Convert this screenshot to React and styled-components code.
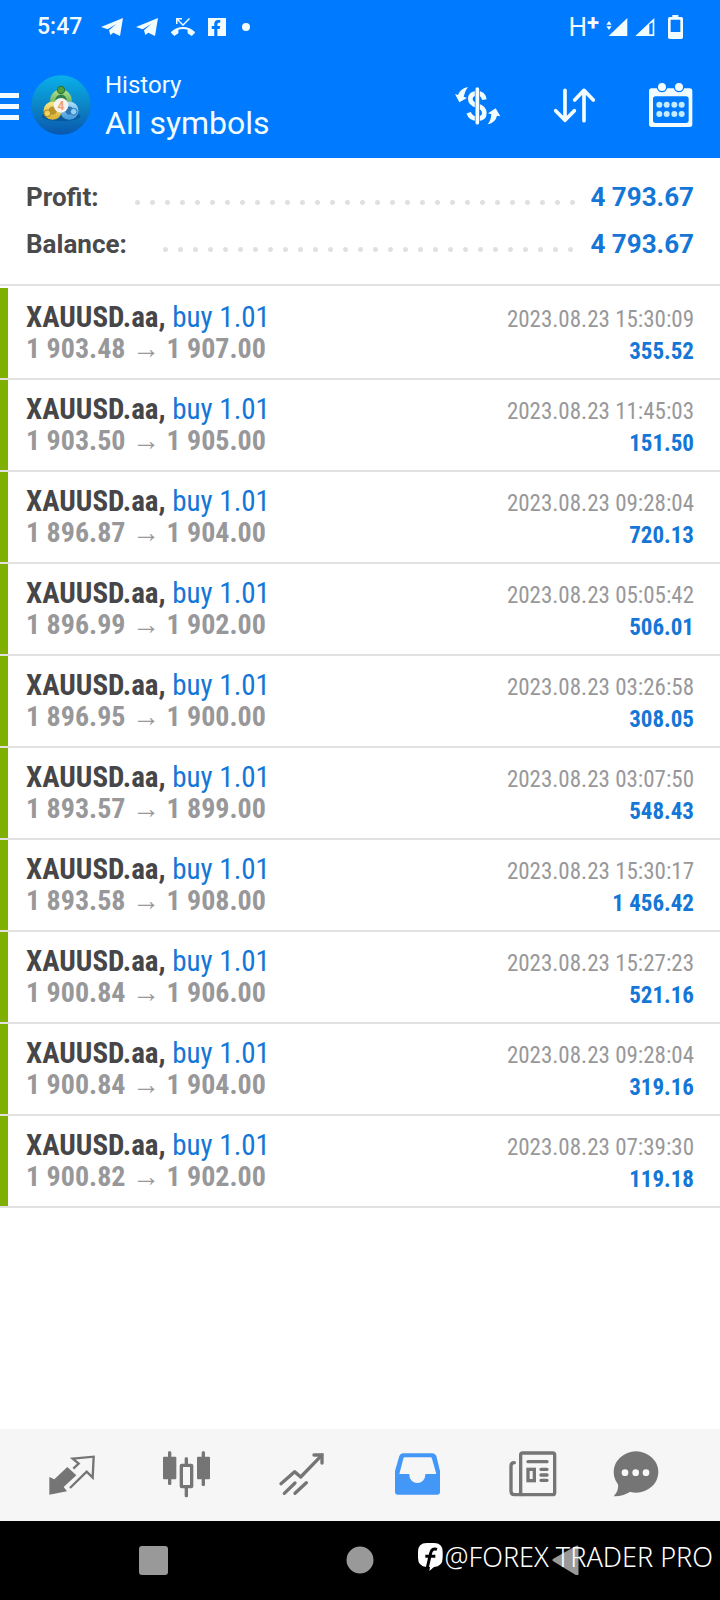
import React from 'react'
import styled, { createGlobalStyle } from 'styled-components'
import { FaFacebookF } from 'react-icons/fa'
import { MdPhoneMissed } from 'react-icons/md'

const deals = [
  { open: '1 903.48', close: '1 907.00', time: '2023.08.23 15:30:09', profit: '355.52' },
  { open: '1 903.50', close: '1 905.00', time: '2023.08.23 11:45:03', profit: '151.50' },
  { open: '1 896.87', close: '1 904.00', time: '2023.08.23 09:28:04', profit: '720.13' },
  { open: '1 896.99', close: '1 902.00', time: '2023.08.23 05:05:42', profit: '506.01' },
  { open: '1 896.95', close: '1 900.00', time: '2023.08.23 03:26:58', profit: '308.05' },
  { open: '1 893.57', close: '1 899.00', time: '2023.08.23 03:07:50', profit: '548.43' },
  { open: '1 893.58', close: '1 908.00', time: '2023.08.23 15:30:17', profit: '1 456.42' },
  { open: '1 900.84', close: '1 906.00', time: '2023.08.23 15:27:23', profit: '521.16' },
  { open: '1 900.84', close: '1 904.00', time: '2023.08.23 09:28:04', profit: '319.16' },
  { open: '1 900.82', close: '1 902.00', time: '2023.08.23 07:39:30', profit: '119.18' },
]

const TelegramIcon = () => (
  <svg width="22" height="18" viewBox="0 0 66 54" fill="currentColor">
    <path d="M0 27 L66 0 L57 54 L37 44 L28 51 L24 37 L46 18 L20 34 Z" />
  </svg>
)

const MobileSignalIcon = () => (
  <svg width="22" height="20" viewBox="0 0 66 60" fill="currentColor">
    <path d="M64 3 V57 H8 Z" />
    <path d="M1 23 L9 12 L17 23 Z M1 28 L9 39 L17 28 Z" />
  </svg>
)

const WeakSignalIcon = () => (
  <svg width="20" height="20" viewBox="0 0 60 60" fill="currentColor">
    <path fillRule="evenodd" d="M58 3 V57 H1 Z M43 22 V52 H53 V16 Z" />
  </svg>
)

const BatteryIcon = () => (
  <svg width="15" height="24" viewBox="0 0 45 72" fill="currentColor">
    <path
      fillRule="evenodd"
      d="M13 0 H31 V6 H40 Q45 6 45 11 V67 Q45 72 40 72 H5 Q0 72 0 67 V11 Q0 6 5 6 H13 Z M8 14 V51 H37 V14 Z"
    />
  </svg>
)

const AppLogo = () => (
  <svg width="60" height="60" viewBox="0 0 180 180">
    <defs>
      <linearGradient id="sky" x1="0" y1="0" x2="0" y2="1">
        <stop offset="0" stopColor="#08b0ea" />
        <stop offset="0.5" stopColor="#0c86c6" />
        <stop offset="1" stopColor="#0a58ae" />
      </linearGradient>
      <linearGradient id="leaf" x1="0" y1="0" x2="0" y2="1">
        <stop offset="0" stopColor="#a3da86" />
        <stop offset="1" stopColor="#4f9f45" />
      </linearGradient>
      <linearGradient id="gold" x1="0" y1="0" x2="0" y2="1">
        <stop offset="0" stopColor="#f3e27e" />
        <stop offset="1" stopColor="#dcb43a" />
      </linearGradient>
      <linearGradient id="water" x1="0" y1="0" x2="0" y2="1">
        <stop offset="0" stopColor="#a4d8f6" />
        <stop offset="1" stopColor="#4b9fe0" />
      </linearGradient>
    </defs>
    <circle cx="90" cy="90" r="89" fill="url(#sky)" />
    <ellipse cx="90" cy="124" rx="58" ry="14" fill="#07427c" opacity="0.5" />
    <circle cx="90" cy="76" r="25" fill="#2f8050" stroke="url(#leaf)" strokeWidth="15" />
    <circle cx="65" cy="107" r="20" fill="#b8922c" stroke="url(#gold)" strokeWidth="15" />
    <circle cx="115" cy="107" r="20" fill="#2c74b4" stroke="url(#water)" strokeWidth="15" />
    <circle cx="90" cy="45" r="11" fill="#4f9f3c" stroke="#2b7030" strokeWidth="3" />
    <circle cx="49" cy="115" r="10" fill="#f0d35a" stroke="#a88424" strokeWidth="3" />
    <circle cx="128" cy="110" r="10" fill="#8fd0f5" stroke="#2d74b4" strokeWidth="3" />
    <circle cx="90" cy="91" r="22" fill="#f6f3ee" />
    <text x="90" y="104" textAnchor="middle" fontFamily="Roboto, sans-serif" fontSize="36" fontWeight="700" fill="#f0a070">
      4
    </text>
  </svg>
)

const CurrencyIcon = () => (
  <svg width="48" height="48" viewBox="0 0 144 144" fill="none" stroke="currentColor">
    <path d="M88 56 Q85 37 67 37 Q46 37 46 54 Q46 68 67 74 Q88 80 88 96 Q88 113 67 113 Q47 113 41 95" strokeWidth="14" />
    <path d="M67 20 V130" stroke="#007aff" strokeWidth="15" />
    <path d="M67 24 V125" strokeWidth="11" strokeLinecap="round" />
    <g fill="currentColor" stroke="none">
      <path d="M39 18 Q16 22 9 42 L0 39 L13 64 L36 51 L26 47 Q29 30 39 18Z" />
      <path d="M98 130 Q122 124 126 104 L136 106 L122 82 L99 97 L109 100 Q108 118 98 130Z" />
    </g>
  </svg>
)

const SortIcon = () => (
  <svg width="48" height="48" viewBox="0 0 144 144" fill="none" stroke="currentColor" strokeWidth="11" strokeLinecap="round" strokeLinejoin="round">
    <path d="M42 28 V118 M14 89 L42 118 L70 89" />
    <path d="M99 119 V28 M71 57 L99 28 L127 57" />
  </svg>
)

const CalendarIcon = () => (
  <svg width="48" height="48" viewBox="0 0 144 144" fill="currentColor">
    <path
      fillRule="evenodd"
      d="M14 22 H128 Q136 22 136 30 V130 Q136 138 128 138 H14 Q6 138 6 130 V30 Q6 22 14 22 Z M26 46 Q18 46 18 54 V118 Q18 126 26 126 H117 Q125 126 125 118 V54 Q125 46 117 46 Z"
    />
    <circle cx="45" cy="18" r="14" stroke="#007aff" strokeWidth="4" />
    <circle cx="96" cy="18" r="14" stroke="#007aff" strokeWidth="4" />
    <g fill="#c4ebff">
      {[37, 59, 82, 104].map((x) => (
        <React.Fragment key={x}>
          <circle cx={x} cy="71" r="9" />
          <circle cx={x} cy="99" r="9" />
        </React.Fragment>
      ))}
    </g>
  </svg>
)

const QuotesIcon = () => (
  <svg width="48" height="48" viewBox="0 0 144 144" fill="none" stroke="currentColor">
    <path d="M7 78 L22 85 L61 48 L88 73 L50 108 L60 121 L7 131 Z" fill="currentColor" stroke="none" />
    <path d="M79 53 L95 38 L77 23 L140 17 L137 80 L119 62 L69 111" strokeWidth="7" />
  </svg>
)

const ChartIcon = () => (
  <svg width="48" height="48" viewBox="0 0 144 144" fill="currentColor">
    <rect x="3" y="17" width="40" height="68" rx="3" />
    <rect x="18" y="1" width="10" height="101" rx="4" />
    <rect x="105" y="17" width="39" height="68" rx="3" />
    <rect x="119" y="1" width="10" height="104" rx="4" />
    <rect x="58" y="43" width="31" height="64" rx="1" fill="none" stroke="currentColor" strokeWidth="10" />
    <rect x="68" y="19" width="10" height="22" rx="4" />
    <rect x="68" y="108" width="10" height="31" rx="4" />
  </svg>
)

const TradeIcon = () => (
  <svg width="48" height="48" viewBox="0 0 144 144" fill="none" stroke="currentColor" strokeWidth="10" strokeLinecap="round" strokeLinejoin="round">
    <path d="M9 98 L50 62 L68 78 L131 13" />
    <path d="M108 12 H132 V36" strokeLinejoin="miter" />
    <path d="M19 127 L51 96 M51 127 L85 95" />
  </svg>
)

const HistoryIcon = () => (
  <svg width="48" height="48" viewBox="0 0 144 144" fill="currentColor">
    <path
      fillRule="evenodd"
      d="M27 7 H115 Q124 7 127 15 L138 60 V124 Q138 131 131 131 H10 Q3 131 3 124 V60 L16 15 Q19 7 27 7 Z M32 19 Q29 19 28 23 L16 69 H46 V72 A24 24 0 0 0 94 72 V69 H127 L114 23 Q113 19 110 19 Z"
    />
  </svg>
)

const NewsIcon = () => (
  <svg width="48" height="48" viewBox="0 0 144 144" fill="none" stroke="currentColor" strokeWidth="10" strokeLinecap="round">
    <rect x="35" y="6" width="102" height="125" rx="6" />
    <path d="M16 35 Q6 35 6 45 V121 Q6 131 16 131 H36" />
    <path d="M57 32 H114 M96 55 H114 M96 72 H114 M96 88 H114" />
    <rect x="57" y="55" width="19" height="34" />
  </svg>
)

const MessagesIcon = () => (
  <svg width="48" height="48" viewBox="0 0 144 144" fill="currentColor">
    <ellipse cx="72" cy="63" rx="67" ry="62" />
    <path d="M18 95 Q22 118 5 136 Q34 137 58 120 Z" />
    <g fill="#f6f6f6">
      <circle cx="39" cy="65" r="10" />
      <circle cx="71" cy="65" r="10" />
      <circle cx="102" cy="65" r="10" />
    </g>
  </svg>
)

const PageLogo = () => (
  <svg width="25" height="28" viewBox="0 0 75 84">
    <path d="M26 0 H48 Q74 0 74 26 V44 Q74 70 48 72 L34 84 L36 72 H26 Q0 70 0 44 V26 Q0 0 26 0 Z" fill="#fff" />
    <path d="M28 74 L38 30 Q42 14 57 19 M22 40 H52" fill="none" stroke="#000" strokeWidth="9" />
  </svg>
)

const tabs = [
  { name: 'Quotes', icon: <QuotesIcon /> },
  { name: 'Chart', icon: <ChartIcon /> },
  { name: 'Trade', icon: <TradeIcon /> },
  { name: 'History', icon: <HistoryIcon />, active: true },
  { name: 'News', icon: <NewsIcon /> },
  { name: 'Messages', icon: <MessagesIcon /> },
]

const App = () => {
  return (
    <Screen>
      <GlobalStyle />
      <Header>
        <StatusBar>
          <Clock>5:47</Clock>
          <TelegramIcon />
          <TelegramIcon />
          <MdPhoneMissed size={24} />
          <SquareBadge>
            <FaFacebookF size={16} />
          </SquareBadge>
          <MoreDot />
          <Signals>
            <Network>
              H<Plus>+</Plus>
            </Network>
            <MobileSignalIcon />
            <WeakSignalIcon />
          </Signals>
          <BatteryIcon />
        </StatusBar>
        <Toolbar>
          <MenuButton aria-label="Menu">
            <MenuLine />
            <MenuLine />
            <MenuLine />
          </MenuButton>
          <AppLogo />
          <Heading>
            <Title>History</Title>
            <Subtitle>All symbols</Subtitle>
          </Heading>
          <Actions>
            <IconButton aria-label="Currency">
              <CurrencyIcon />
            </IconButton>
            <IconButton aria-label="Sort">
              <SortIcon />
            </IconButton>
            <IconButton aria-label="Period">
              <CalendarIcon />
            </IconButton>
          </Actions>
        </Toolbar>
      </Header>

      <Main>
        <Summary>
          <SummaryRow>
            <SummaryLabel>Profit:</SummaryLabel>
            <SummaryValue>4 793.67</SummaryValue>
          </SummaryRow>
          <SummaryRow>
            <SummaryLabel>Balance:</SummaryLabel>
            <SummaryValue>4 793.67</SummaryValue>
          </SummaryRow>
        </Summary>
        <DealList>
          {deals.map((deal) => (
            <Deal key={deal.time}>
              <DealColumn>
                <Symbol>
                  XAUUSD.aa, <Side>buy 1.01</Side>
                </Symbol>
                <Prices>
                  {deal.open} <Arrow>→</Arrow> {deal.close}
                </Prices>
              </DealColumn>
              <DealColumn $end>
                <Time>{deal.time}</Time>
                <Profit>{deal.profit}</Profit>
              </DealColumn>
            </Deal>
          ))}
        </DealList>
      </Main>

      <TabBar>
        {tabs.map((tab) => (
          <Tab key={tab.name} href="#" aria-label={tab.name} $active={tab.active}>
            {tab.icon}
          </Tab>
        ))}
      </TabBar>

      <SystemBar>
        <SystemButton aria-label="Recent apps">
          <svg width="30" height="30" viewBox="0 0 30 30" fill="currentColor">
            <rect x="1" y="1" width="29" height="29" rx="3" />
          </svg>
        </SystemButton>
        <SystemButton aria-label="Home">
          <svg width="30" height="30" viewBox="0 0 30 30" fill="currentColor">
            <circle cx="15" cy="15" r="13.5" />
          </svg>
        </SystemButton>
        <SystemButton aria-label="Back">
          <svg width="30" height="30" viewBox="0 0 30 30" fill="currentColor" stroke="currentColor" strokeWidth="3" strokeLinejoin="round">
            <path d="M2 15 L25 2 V29 Z" />
          </svg>
        </SystemButton>
        <Watermark>
          <PageLogo />
          @FOREX TRADER PRO
        </Watermark>
      </SystemBar>
    </Screen>
  )
}

export default App

const GlobalStyle = createGlobalStyle`
* {
    box-sizing: border-box;
}
body {
    margin: 0;
    background: #fff;
    font-family: Roboto, "Liberation Sans", sans-serif;
}
svg {
    display: block;
    flex: none;
}
button {
    margin: 0;
    padding: 0;
    border: 0;
    background: none;
    color: inherit;
    font: inherit;
    cursor: pointer;
}
`

const Screen = styled.div`
display: flex;
flex-direction: column;
min-height: 100vh;
`
const Header = styled.header`
background: #007aff;
color: #f2fcff;
`
const StatusBar = styled.div`
display: flex;
align-items: center;
gap: 13px;
height: 53px;
padding: 0 37px;
`
const Clock = styled.span`
margin-right: 6px;
font-size: 23px;
font-weight: 500;
`
const SquareBadge = styled.span`
display: flex;
align-items: flex-end;
justify-content: flex-end;
width: 18px;
height: 18px;
padding-right: 2px;
background: #f2fcff;
color: #007aff;
`
const MoreDot = styled.span`
width: 8px;
height: 8px;
margin: 0 auto 0 3px;
border-radius: 50%;
background: #f2fcff;
`
const Signals = styled.span`
display: flex;
align-items: center;
gap: 7px;
`
const Network = styled.span`
display: flex;
align-items: center;
font-size: 26px;
line-height: 28px;
`
const Plus = styled.span`
padding-bottom: 8px;
font-size: 22px;
font-weight: 700;
line-height: 20px;
`
const Toolbar = styled.div`
display: flex;
align-items: center;
height: 105px;
padding: 0 25px 2px 0;
`
const MenuButton = styled.button`
display: flex;
flex-direction: column;
gap: 6px;
width: 19px;
margin: 4px 12px 0 0;
`
const MenuLine = styled.span`
height: 5px;
background: #f2fcff;
`
const Heading = styled.div`
margin-left: 14px;
`
const Title = styled.h1`
margin: 0;
font-size: 24px;
font-weight: 400;
line-height: 36px;
`
const Subtitle = styled.p`
margin: 0;
font-size: 32px;
line-height: 40px;
`
const Actions = styled.div`
display: flex;
gap: 48px;
margin-left: auto;
`
const IconButton = styled.button`
width: 48px;
height: 48px;
`
const Main = styled.main`
flex: 1;
`
const Summary = styled.dl`
margin: 0 0 2px;
padding: 15px 26px 17px;
border-bottom: 2px solid #e1e1e1;
font-size: 26px;
font-weight: 700;
`
const SummaryRow = styled.div`
display: flex;
align-items: center;
height: 47px;
&::before {
    content: "";
    order: 1;
    flex: 1;
    height: 15px;
    margin: 12px 10px 0 31px;
    background: radial-gradient(circle, #e0e0e0 2px, transparent 3px) 0 0 / 15px 15px;
}
`
const SummaryLabel = styled.dt`
color: #4a4a4c;
`
const SummaryValue = styled.dd`
order: 2;
margin: 0;
color: #1476d6;
`
const DealList = styled.ul`
margin: 0;
padding: 0;
list-style: none;
font-family: "Roboto Condensed", "Liberation Sans Narrow", Roboto, sans-serif;
`
const Deal = styled.li`
display: flex;
justify-content: space-between;
height: 92px;
padding: 13px 26px 0;
border-bottom: 2px solid #e1e1e1;
background: linear-gradient(#7fb000, #7fb000) 0 0 / 8px 100% no-repeat;
`
const DealColumn = styled.div`
display: flex;
flex-direction: column;
padding-top: ${(props) => (props.$end ? '3px' : '0')};
text-align: ${(props) => (props.$end ? 'right' : 'left')};
line-height: 32px;
`
const Symbol = styled.span`
color: #464649;
font-size: 29px;
font-weight: 700;
`
const Side = styled.span`
color: #1476d6;
font-weight: 400;
`
const Prices = styled.span`
color: #98989a;
font-size: 28px;
font-weight: 700;
`
const Arrow = styled.span`
font-weight: 400;
`
const Time = styled.span`
color: #98989a;
font-size: 23px;
`
const Profit = styled.span`
color: #1476d6;
font-size: 23px;
font-weight: 700;
`
const TabBar = styled.nav`
display: grid;
grid-template-columns: repeat(5, 13fr) 10fr;
align-items: center;
height: 92px;
padding: 0 40px 0 13px;
background: #f6f6f6;
`
const Tab = styled.a`
display: flex;
justify-content: center;
color: ${(props) => (props.$active ? '#4397f7' : '#757575')};
`
const SystemBar = styled.footer`
position: relative;
display: grid;
grid-template-columns: repeat(3, 1fr);
height: 79px;
padding: 0 50px 2px;
background: #000;
`
const SystemButton = styled.button`
display: flex;
align-items: center;
justify-content: center;
color: #999;
`
const Watermark = styled.div`
position: absolute;
top: 16px;
right: 7px;
display: flex;
align-items: center;
gap: 2px;
color: #fff;
font-family: "Noto Sans", sans-serif;
font-size: 27px;
font-weight: 300;
line-height: 40px;
white-space: nowrap;
`
